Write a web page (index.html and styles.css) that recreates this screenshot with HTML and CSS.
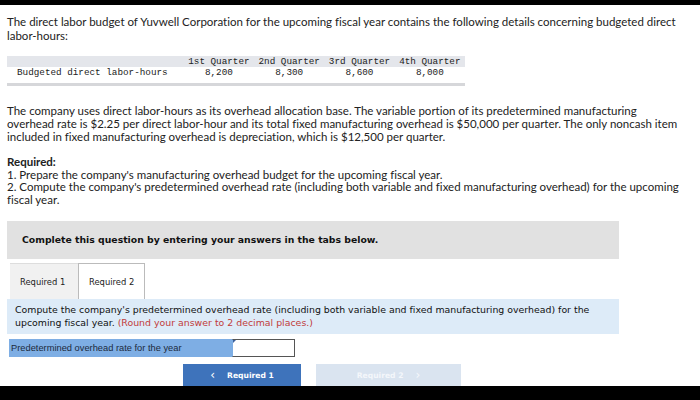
FILE: index.html
```html
<!DOCTYPE html>
<html>
<head>
<meta charset="utf-8">
<link rel="stylesheet" href="styles.css">
</head>
<body>
<div class="topbar"></div>
<div class="page">
  <p class="intro">The direct labor budget of Yuvwell Corporation for the upcoming fiscal year contains the following details concerning budgeted direct labor-hours:</p>
  <table class="budget">
    <tr class="head"><td class="lbl"></td><td>1st Quarter</td><td>2nd Quarter</td><td>3rd Quarter</td><td>4th Quarter</td></tr>
    <tr class="data"><td class="lbl">Budgeted direct labor-hours</td><td>8,200</td><td>8,300</td><td>8,600</td><td>8,000</td></tr>
  </table>
  <div class="rule"></div>
  <p class="para">The company uses direct labor-hours as its overhead allocation base. The variable portion of its predetermined manufacturing<br>overhead rate is $2.25 per direct labor-hour and its total fixed manufacturing overhead is $50,000 per quarter. The only noncash item<br>included in fixed manufacturing overhead is depreciation, which is $12,500 per quarter.</p>
  <div class="req">
    <b>Required:</b><br>
    1. Prepare the company's manufacturing overhead budget for the upcoming fiscal year.<br>
    2. Compute the company's predetermined overhead rate (including both variable and fixed manufacturing overhead) for the upcoming fiscal year.
  </div>
  <div class="notice">Complete this question by entering your answers in the tabs below.</div>
  <div class="tabs">
    <div class="tab">Required 1</div>
    <div class="tab active">Required 2</div>
  </div>
  <div class="prompt"><span>Compute the company's predetermined overhead rate (including both variable and fixed manufacturing overhead) for the</span><br><span>upcoming fiscal year.</span> <span class="red">(Round your answer to 2 decimal places.)</span></div>
  <div class="answer">
    <div class="alabel">Predetermined overhead rate for the year</div>
    <div class="ainput"><span class="flag"></span></div>
  </div>
  <div class="nav">
    <div class="btn prev"><span class="chev">&lsaquo;</span>Required 1</div>
    <div class="btn next">Required 2<span class="chev r">&rsaquo;</span></div>
  </div>
</div>
<div class="bottombar"></div>
</body>
</html>
```
FILE: styles.css
```css
html, body { margin: 0; padding: 0; background: #fff; }
body { width: 700px; height: 400px; overflow: hidden; display: flex; flex-direction: column; }
.topbar { height: 5px; background: #000; flex: none; }
.bottombar { height: 14px; background: #000; flex: none; }
.page { flex: none; height: 381px; overflow: hidden; padding: 0 7px; box-sizing: border-box; font-family: Lato, "Open Sans", sans-serif; color: #222; font-variant-ligatures: none; }
.intro { margin: 10px 0 0; font-size: 11.5px; line-height: 14px; width: 680px; }
.budget { margin-top: 13px; border-collapse: collapse; width: 458px; font-family: "Liberation Mono", monospace; font-size: 9.3px; color: #222; }
.budget td { padding: 0; text-align: center; width: 70px; }
.budget td.lbl { width: 166px; text-align: left; padding-left: 10px; }
.budget .head td { background: #e4e6eb; height: 11px; line-height: 11px; }
.budget .data td { height: 12px; line-height: 12px; }
.rule { width: 458px; height: 3px; background: #d6d7da; margin-top: 4px; }
.para { margin: 18px 0 0; font-size: 11.5px; line-height: 13px; width: 686px; }
.req { margin-top: 13px; font-size: 11.5px; line-height: 12.7px; width: 690px; }
.req b { font-weight: 700; }
.notice { margin-top: 14px; width: 612px; height: 38px; box-sizing: border-box; background: #e1e1e1; font-family: "DejaVu Sans", Verdana, sans-serif; font-weight: bold; font-size: 9.3px; color: #111; padding-left: 15px; display: flex; align-items: center; }
.tabs { display: flex; margin-top: 4px; margin-left: 3px; height: 36px; }
.tab { width: 68px; box-sizing: border-box; background: #f1f1f1; font-family: "DejaVu Sans", Verdana, sans-serif; font-size: 8.4px; color: #222; display: flex; align-items: center; padding-left: 10px; padding-top: 2px; border-top: 1px solid #ddd; }
.tab.active { background: #fff; border: 1px solid #bbb; border-bottom: none; width: 67px; }
.prompt { width: 612px; height: 35px; box-sizing: border-box; background: #ddebf8; padding: 4px 8px 0; font-family: "DejaVu Sans", Verdana, sans-serif; font-size: 9.4px; line-height: 13.5px; color: #111; white-space: nowrap; }
.red { color: #c13b3b; }
.answer { display: flex; margin-top: 5px; margin-left: 2px; height: 18px; }
.alabel { width: 223px; background: #7eaee4; font-family: "Liberation Sans", Arial, sans-serif; font-size: 9.3px; color: #1c2a3c; display: flex; align-items: center; padding-left: 2px; box-sizing: border-box; }
.ainput { width: 63px; box-sizing: border-box; border: 1px solid #555; border-left-color: #7eaee4; background: #fff; position: relative; }
.flag { position: absolute; left: 0; top: 0; width: 0; height: 0; border-top: 3px solid #3b5f9a; border-right: 3px solid transparent; }
.nav { display: flex; margin-top: 7px; margin-left: 176px; gap: 15px; }
.btn { height: 30px; box-sizing: border-box; padding-top: 7px; display: flex; justify-content: center; font-family: "DejaVu Sans", Verdana, sans-serif; font-weight: bold; font-size: 7.6px; color: #fff; }
.btn.prev { width: 118px; background: #3e73bb; }
.btn.next { width: 145px; background: #dae4f0; color: #f4f7fb; }
.chev { font-size: 12px; line-height: 9px; margin-right: 12px; font-weight: normal; }
.chev.r { margin: 0 0 0 12px; }
```
